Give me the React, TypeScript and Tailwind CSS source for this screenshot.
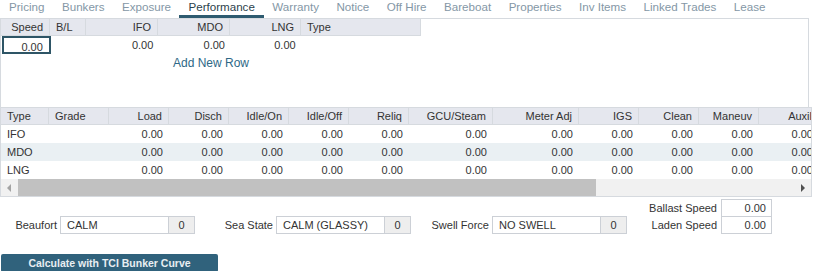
import React from "react";

const tabs = ["Pricing", "Bunkers", "Exposure", "Performance", "Warranty", "Notice", "Off Hire", "Bareboat", "Properties", "Inv Items", "Linked Trades", "Lease"];

const topCols = [
  { name: "Speed", w: 49, right: true },
  { name: "B/L", w: 36, right: false },
  { name: "IFO", w: 72, right: true },
  { name: "MDO", w: 72, right: true },
  { name: "LNG", w: 71, right: true },
  { name: "Type", w: 120, right: false },
];

const bottomCols = [
  { name: "Type", w: 48, right: false },
  { name: "Grade", w: 60, right: false },
  { name: "Load", w: 60, right: true },
  { name: "Disch", w: 60, right: true },
  { name: "Idle/On", w: 60, right: true },
  { name: "Idle/Off", w: 60, right: true },
  { name: "Reliq", w: 60, right: true },
  { name: "GCU/Steam", w: 84, right: true },
  { name: "Meter Adj", w: 86, right: true },
  { name: "IGS", w: 60, right: true },
  { name: "Clean", w: 60, right: true },
  { name: "Maneuv", w: 60, right: true },
  { name: "Auxil", w: 60, right: true },
];

const fuelRows = ["IFO", "MDO", "LNG"];

function LookupField({ label, value, labelW }: { label: string; value: string; labelW: string }) {
  return (
    <div className="flex items-center">
      <span className={`${labelW} shrink-0 whitespace-nowrap text-right pr-[3px]`}>{label}</span>
      <div className="flex h-[18px] w-[135px] border border-[#ccd0d6] bg-white">
        <div className="flex-1 pl-[6px] leading-[16px] whitespace-nowrap">{value}</div>
        <div className="w-[26px] bg-[#eeeeee] border-l border-[#ccd0d6] text-center leading-[16px]">0</div>
      </div>
    </div>
  );
}

export default function App() {
  return (
    <div className="w-[813px] h-[271px] overflow-hidden bg-white text-[11px] text-[#333] font-['Liberation_Sans',Arial,sans-serif]">
      {/* tabs */}
      <div className="flex h-[18px] pl-[9px] gap-[17.5px] text-[11.6px]">
        {tabs.map((t) =>
          t === "Performance" ? (
            <div key={t} className="relative -mx-[9px] px-[9px] text-[#2c3f4c] leading-[13px] whitespace-nowrap">
              {t}
              <div className="absolute left-0 right-0 bottom-0 h-[3px] bg-[#2e5b70]" />
            </div>
          ) : (
            <div key={t} className="text-[#8497a6] leading-[13px] whitespace-nowrap">{t}</div>
          )
        )}
      </div>

      {/* upper grid */}
      <div className="w-[809px] h-[90px] border-t border-l border-r border-[#d6dadf]">
        <div className="flex w-[420px] h-[17px] bg-[#e5e7ee] border-b border-[#d6dadf]">
          {topCols.map((c) => (
            <div
              key={c.name}
              style={{ width: c.w }}
              className={`border-r border-[#d6dadf] leading-[16px] px-[6px] ${c.right ? "text-right" : "text-left"}`}
            >
              {c.name}
            </div>
          ))}
        </div>
        <div className="flex w-[420px] h-[18px]">
          {topCols.map((c, i) => (
            <div
              key={c.name}
              style={{ width: c.w }}
              className={`leading-[18px] px-[6px] text-right ${i === 0 ? "border-2 border-[#2e5566] mx-px leading-[14px] px-[5px]" : ""}`}
            >
              {c.right ? "0.00" : ""}
            </div>
          ))}
        </div>
        <div className="w-[420px] text-center mt-px text-[#2e6886] leading-[16px] text-[12px]">Add New Row</div>
      </div>

      {/* lower grid */}
      <div className="mt-[-1px] w-[812px] overflow-hidden border border-[#d6dadf]">
        <div className="flex h-[17px] bg-[#e5e7ee] border-b border-[#d6dadf] w-max">
          {bottomCols.map((c) => (
            <div
              key={c.name}
              style={{ width: c.w }}
              className={`shrink-0 border-r border-[#d6dadf] leading-[16px] px-[6px] whitespace-nowrap ${c.right ? "text-right" : "text-left"}`}
            >
              {c.name}
            </div>
          ))}
        </div>
        {fuelRows.map((r, ri) => (
          <div key={r} className={`flex h-[18px] w-max ${ri === 1 ? "bg-[#eaf0f3]" : "bg-white"}`}>
            {bottomCols.map((c, ci) => (
              <div
                key={c.name}
                style={{ width: c.w }}
                className={`shrink-0 leading-[18px] px-[6px] ${c.right ? "text-right" : "text-left"}`}
              >
                {ci === 0 ? r : c.right ? "0.00" : ""}
              </div>
            ))}
          </div>
        ))}
        {/* scrollbar */}
        <div className="flex items-center h-[17px] bg-[#f1f1f1]">
          <div className="w-[17px] flex justify-center">
            <svg width="5" height="8" viewBox="0 0 5 8"><path d="M4 0L0 4L4 8Z" fill="#a3a3a3" /></svg>
          </div>
          <div className="w-[578px] h-[17px] bg-[#c1c1c1]" />
          <div className="flex-1" />
          <div className="w-[17px] flex justify-center">
            <svg width="5" height="8" viewBox="0 0 5 8"><path d="M1 0L5 4L1 8Z" fill="#505050" /></svg>
          </div>
        </div>
      </div>

      {/* bottom fields */}
      <div className="flex items-end h-[36px] mt-px">
        <LookupField label="Beaufort" value="CALM" labelW="w-[60px]" />
        <LookupField label="Sea State" value="CALM (GLASSY)" labelW="w-[81px]" />
        <LookupField label="Swell Force" value="NO SWELL" labelW="w-[81px]" />
        <div className="flex flex-col">
          <div className="flex items-center">
            <span className="w-[94px] text-right pr-[4px] leading-[17px] whitespace-nowrap">Ballast Speed</span>
            <div className="w-[51px] h-[18px] border border-[#ccd0d6] text-right pr-[5px] leading-[16px]">0.00</div>
          </div>
          <div className="flex items-center -mt-px">
            <span className="w-[94px] text-right pr-[4px] leading-[17px] whitespace-nowrap">Laden Speed</span>
            <div className="w-[51px] h-[18px] border border-[#ccd0d6] text-right pr-[5px] leading-[16px]">0.00</div>
          </div>
        </div>
      </div>

      <div className="mt-[20px] ml-px w-[217px] h-[18px] rounded-[2px] bg-[#30627c] text-[#e8eef2] text-[10.5px] font-bold text-center leading-[18px]">
        Calculate with TCI Bunker Curve
      </div>
    </div>
  );
}
